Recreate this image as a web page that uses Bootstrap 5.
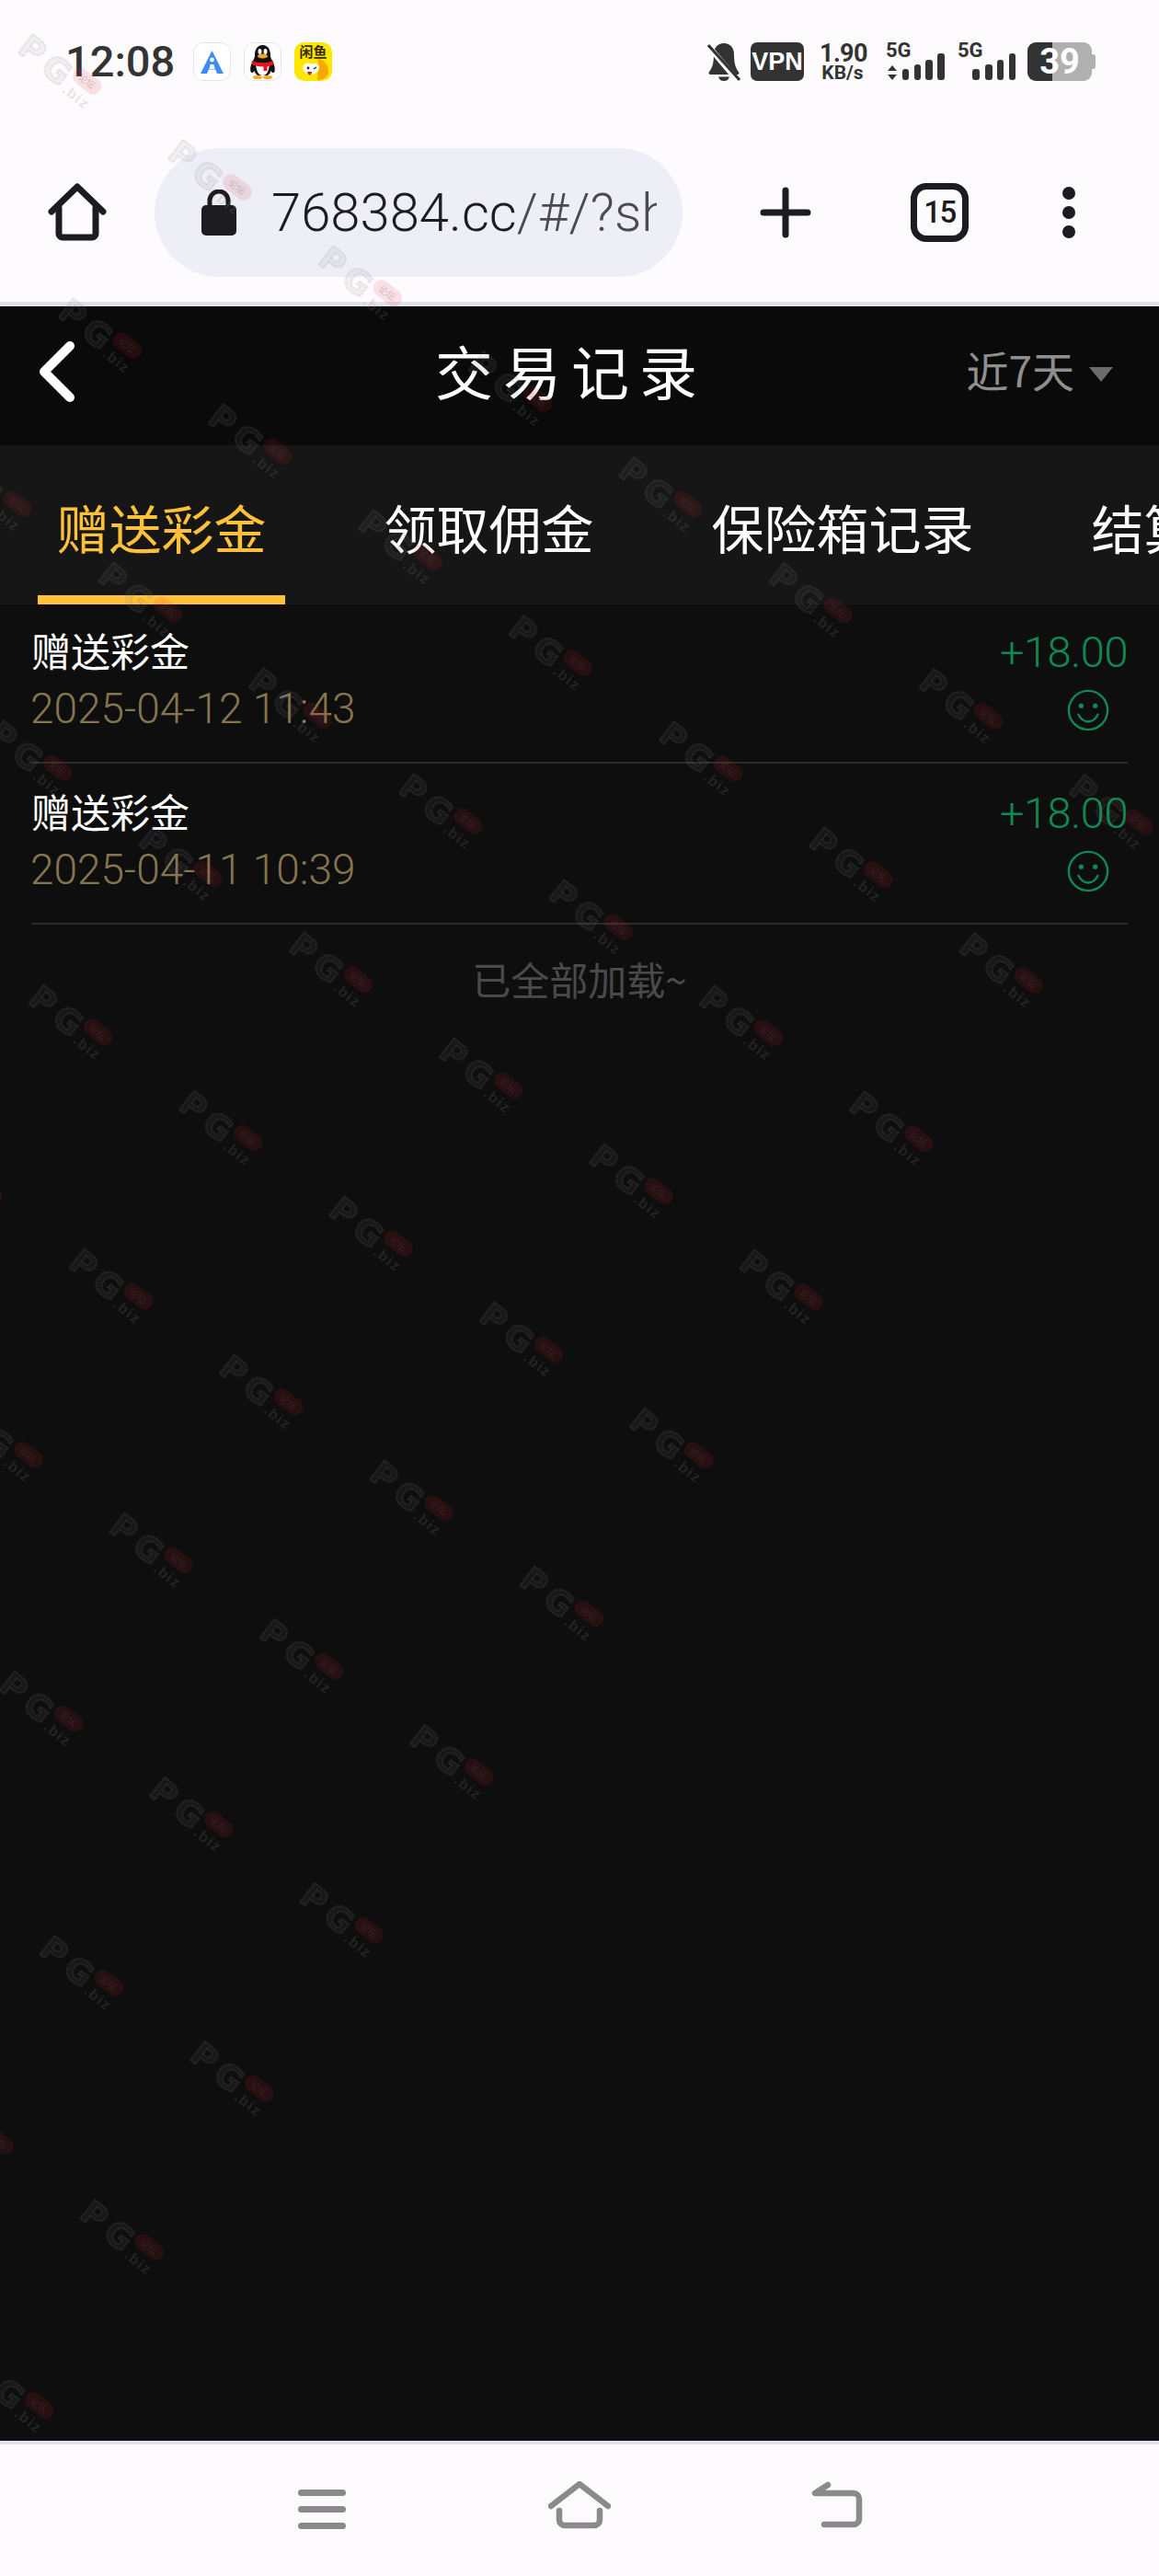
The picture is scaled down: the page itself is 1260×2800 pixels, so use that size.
<!doctype html>
<html lang="zh">
<head>
<meta charset="utf-8">
<title>交易记录</title>
<link href="https://cdn.jsdelivr.net/npm/bootstrap@5.3.0/dist/css/bootstrap.min.css" rel="stylesheet">
<style>
html,body{margin:0;background:#0e0e0e}
.phone{width:1260px;height:2800px;position:relative;overflow:hidden;font-family:"Noto Sans CJK SC","Noto Sans",sans-serif}
.chrome-top{background:#fefbfe;height:333px;border-bottom:5px solid #e2e2ec;flex:none}
.statusline{height:132px;padding-top:46px;padding-left:71px;color:#333}
.clock{font:500 47px/42px Roboto,sans-serif;width:139px}
.appicon{width:41px;height:42px;border-radius:10px;margin-right:14px;display:block}
.sbell{margin-left:394px}
.vpnbox{width:58px;height:42px;background:#333;color:#fff;border-radius:7px;font:700 27px/42px "Liberation Sans Narrow","Liberation Sans",sans-serif;text-align:center;margin-left:11px}
.speed{width:50px;margin-left:17px;font-family:Roboto,sans-serif;font-weight:700;text-align:center}
.speed div:first-child{font-size:27px;line-height:24px;letter-spacing:-.6px}
.speed div:last-child{font-size:21px;line-height:18px}
.sigcol{height:42px;position:relative}
.sig5g{font:700 22px/18px Roboto,sans-serif;color:#333}
.sigbars{display:block;margin-top:-18px}
.battbox{width:70px;height:42px;margin-left:13px;margin-right:4px;border-radius:9px;background:linear-gradient(90deg,#333 27px,#b0b0b0 27px);color:#fff;font:700 38px/42px Roboto,sans-serif;text-align:center;position:relative}
.battbox::after{content:"";position:absolute;left:70px;top:13px;width:4px;height:16px;background:#b0b0b0;border-radius:0 3px 3px 0}
.toolbar{padding:29px 0 0 52px;height:196px}
.urlpill{width:574px;height:140px;margin-left:52px;border-radius:70px;background:#eeeff6;padding-left:51px;overflow:hidden}
.urltext{margin-left:38px;width:419px;overflow:hidden;white-space:nowrap;font:300 58px/140px Roboto,sans-serif;color:#1c1c22}
.urltext span{color:#4a4a55}
.thome{margin-top:38px}
.tplus{margin-left:84px;margin-top:42px}
.tabcount{margin-left:108px;margin-top:38px;width:63px;height:64px;border:7px solid #1b1b20;border-radius:17px;font:500 33px/50px Roboto,sans-serif;letter-spacing:-1.5px;text-align:center;color:#1b1b20}
.tdots{margin-left:102px;margin-top:42px}
.pagehead{height:151px;background:#0a0a0a;flex:none;padding:0 50px 0 42px;position:relative}
.pagetitle{position:absolute;left:0;right:0;top:0;text-align:center;color:#fff;font-size:63px;line-height:138px;letter-spacing:11px;margin:0 0 0 -18px;font-weight:400}
.backchev{position:relative;top:-5px}
.rangepick{margin-left:auto;color:#8f8f8f;font-size:46px;line-height:1;margin-top:-15px}
.rangepick svg{margin-left:16px;margin-top:12px}
.tabstrip{height:173px;background:#161616;flex:none;flex-wrap:nowrap;padding-left:41px;gap:87px;overflow:hidden}
.tabitem{flex:none;height:173px;padding:0 20.5px;color:#fff;font-size:57px;line-height:176px;white-space:nowrap;border-bottom:10px solid transparent}
.tabitem.active{color:#ffc13a;border-bottom-color:#ffc13a}
.tabitem:hover{color:#fff}
.tabitem.active:hover{color:#ffc13a}
.recarea{flex:1;background:#0e0e0e}
.reclist{margin:0 34px;background:transparent;border-radius:0}
.recrow{background:transparent;border:0;border-bottom:2px solid #2b2b2b;border-radius:0!important;padding:21px 0 28px}
.recrow:first-child{padding-top:19px}
.rectitle{color:#fff;font-size:43px;line-height:60px}
.recdate{color:#85764f;font:300 46px/60px Roboto,sans-serif;margin-top:4px;margin-left:-1px}
.recamt{color:#0f8a55;font:300 47px/60px Roboto,sans-serif;letter-spacing:-.5px;text-align:right;margin-top:3px}
.smile{display:block;margin:10px 20px 0 auto}
.loadedall{color:#4a4a4a;font-size:42px;line-height:60px;margin-top:29px;text-align:center}
.chrome-bot{height:147px;background:#fdfafd;border-top:4px solid #e2e2ec;flex:none;padding-top:41px}
.nvmenu{margin-left:324px;margin-top:8px}
.nvhome{margin-left:220px;margin-top:-1px}
.nvback{margin-left:218px;margin-top:-1px}
.wm{position:absolute;left:0;top:0;width:1260px;height:2653px;pointer-events:none}
.wmlet{font:700 36px "DejaVu Sans",sans-serif;fill:rgba(128,128,128,.1);stroke:rgba(128,128,128,.2);stroke-width:2.4;stroke-dasharray:1.4 1}
.wmbiz{font:700 16px "Liberation Sans",sans-serif;fill:rgba(128,128,128,.2);letter-spacing:1.5px}
.wmpill{fill:rgba(225,30,40,.12)}
.wmcn{font:400 10px "Noto Sans CJK SC",sans-serif;fill:rgba(90,90,90,.3)}
</style>
</head>
<body>
<div class="phone d-flex flex-column">
  <header class="chrome-top">
    <div class="statusline d-flex align-items-start">
      <div class="clock">12:08</div>
      <svg class="appicon" viewBox="0 0 41 42"><rect x=".5" y=".5" width="40" height="41" rx="10" fill="#fff" stroke="#e3e3e6"/><path d="M20.5 9 L33 34 H26 L24.3 29.5 H16.7 L15 34 H8 Z" fill="#3d8bf5"/><circle cx="20.5" cy="19" r="2.4" fill="#fff"/><path d="M18.5 24h4l1 5h-6z" fill="#fff"/></svg>
      <svg class="appicon" viewBox="0 0 41 42"><rect x=".5" y=".5" width="40" height="41" rx="10" fill="#fff" stroke="#e3e3e6"/><path d="M20.5 3c-6 0-8.5 5-8.5 11 0 2-.5 3-1.500 5-2 3.500-4 8-3 13 1 2 3 1 4-1 1 3 2 4 4 5h10c2-1 3-2 4-5 1 2 3 3 4 1 1-5-1-9.500-3-13-1-2-1.500-3-1.500-5 0-6-2.500-11-8.500-11z" fill="#111"/><path d="M13 24c1 8 3 12 7.500 12s6.500-4 7.500-12z" fill="#fff"/><ellipse cx="17.500" cy="10" rx="2" ry="3" fill="#fff"/><ellipse cx="23.500" cy="10" rx="2" ry="3" fill="#fff"/><ellipse cx="20.500" cy="15" rx="5.500" ry="2.500" fill="#f5a623"/><path d="M9 20c7 3 16 3 23 0l.5 4c-3 1.500-5 2-7 2.300V31h-4v-4.500C16 26.500 12 25.500 8.500 24z" fill="#e5141e"/><ellipse cx="15" cy="38" rx="5" ry="2" fill="#f5a623"/><ellipse cx="26" cy="38" rx="5" ry="2" fill="#f5a623"/></svg>
      <svg class="appicon" viewBox="0 0 41 42"><rect width="41" height="42" rx="10" fill="#ffe600"/><text x="20.500" y="16" text-anchor="middle" font-family="Noto Sans CJK SC" font-weight="700" font-size="15" fill="#332b00">闲鱼</text><path d="M26 18c7 1 12 8 11 16-2 5-7 7-12 7z" fill="#f7a800"/><path d="M10 25c3-3 8-3 9-1 3-2 8-1 8 3 0 5-5 8-9 8-5 0-11-5-8-10z" fill="#fff"/><circle cx="15" cy="28" r="1.400" fill="#222"/><path d="M21 29l3-2" stroke="#222" stroke-width="1.300"/><path d="M14 32h5c0 4-4 5-5 0z" fill="#c8201a"/></svg>
      <svg class="sbell" width="36" height="42" viewBox="0 0 36 42"><path d="M18 1c-7 0-11 5-11 12 0 9-1.500 15-5 19-1 1.500-.5 3 1.500 3h29c2 0 2.500-1.500 1.500-3-3.500-4-5-10-5-19 0-7-4-12-11-12z" fill="#333"/><path d="M12 37.500h12c-1 3-3 4.500-6 4.500s-5-1.500-6-4.500z" fill="#333"/><path d="M1 4 L33 42" stroke="#fefbfe" stroke-width="6"/><path d="M1 3 L35 41" stroke="#333" stroke-width="3"/></svg>
      <div class="vpnbox">VPN</div>
      <div class="speed"><div>1.90</div><div>KB/s</div></div>
      <div class="sigcol" style="margin-left:22px;width:66px"><div class="sig5g">5G</div><svg class="sigbars" width="66" height="42" viewBox="0 0 66 42"><path d="M7 25l5 6H2zM7 41l-5-6h10z" fill="#333"/><rect x="18" y="29" width="7" height="12" rx="3" fill="#333"/><rect x="31" y="24" width="7" height="17" rx="3" fill="#333"/><rect x="43" y="19" width="8" height="22" rx="3" fill="#333"/><rect x="56" y="12" width="8" height="29" rx="3" fill="#333"/></svg></div>
      <div class="sigcol" style="margin-left:12px;width:63px"><div class="sig5g">5G</div><svg class="sigbars" width="63" height="42" viewBox="0 0 63 42"><rect x="16" y="29" width="8" height="12" rx="3" fill="#333"/><rect x="30" y="24" width="8" height="17" rx="3" fill="#333"/><rect x="43" y="19" width="7" height="22" rx="3" fill="#333"/><rect x="56" y="12" width="7" height="29" rx="3" fill="#333"/></svg></div>
      <div class="battbox">39</div>
    </div>
    <div class="toolbar d-flex align-items-start">
      <svg class="thome" width="64" height="64" viewBox="0 0 64 64" fill="none" stroke="#1b1b20" stroke-width="7" stroke-linecap="round" stroke-linejoin="round"><path d="M4 31 32 4l28 27"/><path d="M12 27v28a4 4 0 0 0 4 4h32a4 4 0 0 0 4-4V27"/></svg>
      <div class="urlpill d-flex align-items-center">
        <svg width="38" height="50" viewBox="0 0 38 50" class="flex-shrink-0"><path d="M9 20v-8a10 10 0 0 1 20 0v8" fill="none" stroke="#1b1b20" stroke-width="5"/><rect y="17" width="38" height="33" rx="5" fill="#1b1b20"/></svg>
        <div class="urltext">768384.cc<span>/#/?shareName=</span></div>
      </div>
      <svg class="tplus" width="56" height="56" viewBox="0 0 56 56" stroke="#1b1b20" stroke-width="7" stroke-linecap="round"><path d="M28 4v48M4 28h48"/></svg>
      <div class="tabcount">15</div>
      <svg class="tdots" width="14" height="56" viewBox="0 0 14 56" fill="#1b1b20"><circle cx="7" cy="7" r="7"/><circle cx="7" cy="28" r="7"/><circle cx="7" cy="49" r="7"/></svg>
    </div>
  </header>

  <div class="pagehead d-flex align-items-center">
    <h1 class="pagetitle">交易记录</h1>
    <svg class="backchev" width="40" height="68" viewBox="0 0 40 68" fill="none" stroke="#fff" stroke-width="10" stroke-linecap="round" stroke-linejoin="round"><path d="M34 6 6 34l28 28"/></svg>
    <div class="rangepick d-flex align-items-center">近7天<svg width="26" height="16" viewBox="0 0 26 16"><path d="M0 0h26L13 16z" fill="#6b6b6b"/></svg></div>
  </div>

  <nav class="nav tabstrip">
    <a class="nav-link tabitem active" href="#">赠送彩金</a>
    <a class="nav-link tabitem" href="#">领取佣金</a>
    <a class="nav-link tabitem" href="#">保险箱记录</a>
    <a class="nav-link tabitem" href="#">结算记录</a>
  </nav>

  <main class="recarea">
    <div class="list-group reclist">
      <div class="list-group-item recrow d-flex justify-content-between">
        <div><div class="rectitle">赠送彩金</div><div class="recdate">2025-04-12 11:43</div></div>
        <div><div class="recamt">+18.00</div><svg class="smile" width="46" height="46" viewBox="0 0 48 48" fill="none" stroke="#0f8a55" stroke-width="2.500" stroke-linecap="round"><circle cx="24" cy="24" r="22"/><circle cx="16" cy="19" r="1.500" fill="#0f8a55"/><circle cx="32" cy="19" r="1.500" fill="#0f8a55"/><path d="M13 29c3 6 7 8 11 8s8-2 11-8"/></svg></div>
      </div>
      <div class="list-group-item recrow d-flex justify-content-between">
        <div><div class="rectitle">赠送彩金</div><div class="recdate">2025-04-11 10:39</div></div>
        <div><div class="recamt">+18.00</div><svg class="smile" width="46" height="46" viewBox="0 0 48 48" fill="none" stroke="#0f8a55" stroke-width="2.500" stroke-linecap="round"><circle cx="24" cy="24" r="22"/><circle cx="16" cy="19" r="1.500" fill="#0f8a55"/><circle cx="32" cy="19" r="1.500" fill="#0f8a55"/><path d="M13 29c3 6 7 8 11 8s8-2 11-8"/></svg></div>
      </div>
    </div>
    <div class="loadedall">已全部加载~</div>
  </main>

  <footer class="chrome-bot d-flex">
    <svg class="nvmenu" width="52" height="43" viewBox="0 0 52 43" stroke="#8a8a8a" stroke-width="7" stroke-linecap="round"><path d="M3.500 3.500h45M3.500 21.500h45M3.500 39.500h45"/></svg>
    <svg class="nvhome" width="68" height="52" viewBox="0 0 68 52" fill="none" stroke="#8a8a8a" stroke-width="6.500" stroke-linecap="round" stroke-linejoin="round"><path d="M3 27 34 3l31 24"/><path d="M12 32v10a6 6 0 0 0 6 6h32a6 6 0 0 0 6-6V32"/></svg>
    <svg class="nvback" width="56" height="52" viewBox="0 0 56 52" fill="none" stroke="#8a8a8a" stroke-width="6.500" stroke-linecap="round" stroke-linejoin="round"><path d="M18 4 4 13h42a6 6 0 0 1 6 6v22a6 6 0 0 1-6 6H14"/></svg>
  </footer>

  <svg class="wm" id="wmlayer" viewBox="0 0 1260 2653" aria-hidden="true">
    <defs>
      <g id="wmark" transform="rotate(38)">
        <text class="wmlet" x="-14" y="13">P</text>
        <text class="wmlet" x="19" y="14">G</text>
        <rect class="wmpill" x="50" y="-18" width="35" height="18" rx="9"/>
        <text class="wmcn" x="57" y="-5">论坛</text>
        <text class="wmbiz" x="52" y="17">.biz</text>
      </g>
    </defs>
  </svg>
</div>
<script>
// watermark stamps lie on a skewed lattice, filling a triangle: rows n >= 0, m + n <= 7
(function(){
  var layer=document.getElementById('wmlayer'),ns='http://www.w3.org/2000/svg';
  for(var n=0;n<=12;n++){for(var m=-8;m<=7-n;m++){
    var x=36+m*163.3+n*43.8,y=54+m*115+n*287.1;
    if(x<-130||x>1300||y<-60||y>2700)continue;
    var u=document.createElementNS(ns,'use');
    u.setAttribute('href','#wmark');u.setAttribute('x',x.toFixed(1));u.setAttribute('y',y.toFixed(1));
    layer.appendChild(u);
  }}
})();
</script>
<script src="https://cdn.jsdelivr.net/npm/bootstrap@5.3.0/dist/js/bootstrap.bundle.min.js"></script>
</body>
</html>
